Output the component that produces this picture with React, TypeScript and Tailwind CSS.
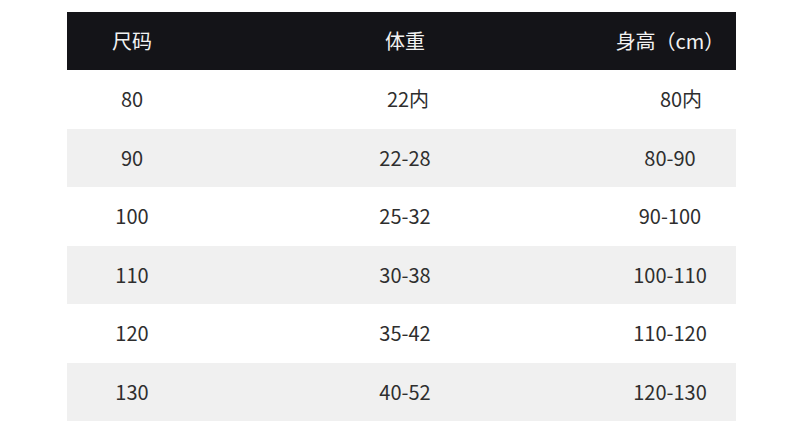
const rows = [
  { size: "80", weight: "22内", height: "80内", wShift: "pl-[6px]", hShift: "pl-[22px]" },
  { size: "90", weight: "22-28", height: "80-90" },
  { size: "100", weight: "25-32", height: "90-100" },
  { size: "110", weight: "30-38", height: "100-110" },
  { size: "120", weight: "35-42", height: "110-120" },
  { size: "130", weight: "40-52", height: "120-130" },
];

export default function App() {
  return (
    <div
      className="w-[800px] h-[427px] bg-white pt-[12px] pl-[67px] overflow-hidden"
      style={{ fontFamily: '"Noto Sans CJK SC", "Noto Sans", sans-serif' }}
    >
      <div className="w-[669px]">
        <div className="flex items-center h-[58px] bg-[#141418] text-[#f2f2f2] text-[20px]">
          <div className="w-[130px] text-center">尺码</div>
          <div className="w-[416px] text-center">体重</div>
          <div className="w-[114px] text-center whitespace-nowrap">身高（cm）</div>
        </div>
        {rows.map((r, i) => (
          <div
            key={r.size}
            className={`flex items-center h-[58.5px] text-[20px] text-[#2e2e2e] ${
              i % 2 === 1 ? "bg-[#f0f0f0]" : "bg-white"
            }`}
          >
            <div className="w-[130px] text-center">{r.size}</div>
            <div className={`w-[416px] text-center ${r.wShift ?? ""}`}>{r.weight}</div>
            <div className={`w-[114px] text-center whitespace-nowrap ${r.hShift ?? ""}`}>{r.height}</div>
          </div>
        ))}
      </div>
    </div>
  );
}
